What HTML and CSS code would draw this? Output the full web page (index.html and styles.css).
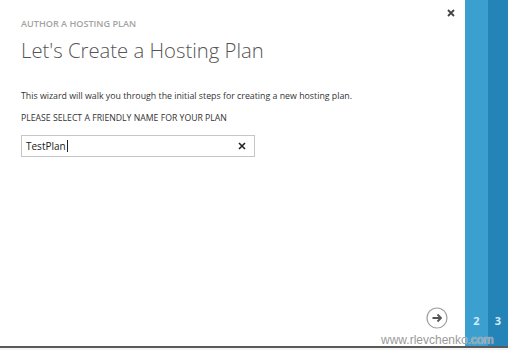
FILE: index.html
```html
<!DOCTYPE html>
<html lang="en">
<head>
<meta charset="utf-8">
<title>Author a Hosting Plan</title>
<link rel="stylesheet" href="styles.css">
</head>
<body>
<div class="frame">
  <div class="screen">
    <main class="wizard">
      <button class="close" aria-label="Close">
        <svg width="8" height="8" viewBox="0 0 8 8"><path d="M1 1L7 7M7 1L1 7" stroke="#444" stroke-width="1.8"/></svg>
      </button>
      <div class="kicker">AUTHOR A HOSTING PLAN</div>
      <h1 class="title">Let's Create a Hosting Plan</h1>
      <p class="intro">This wizard will walk you through the initial steps for creating a new hosting plan.</p>
      <div class="label">PLEASE SELECT A FRIENDLY NAME FOR YOUR PLAN</div>
      <div class="field">
        <span class="value">TestPlan<span class="caret"></span></span>
        <svg class="clear" width="8" height="8" viewBox="0 0 8 8"><path d="M1 1L7 7M7 1L1 7" stroke="#222" stroke-width="1.6"/></svg>
      </div>
      <div class="footer">
        <button class="next" aria-label="Next">
          <svg width="22" height="22" viewBox="0 0 22 22">
            <circle cx="11" cy="11" r="10" fill="none" stroke="#a0a0a0" stroke-width="1.2"/>
            <path d="M6.5 11H15M11.5 7.5L15 11L11.5 14.5" fill="none" stroke="#555" stroke-width="1.8"/>
          </svg>
        </button>
      </div>
    </main>
    <div class="step step-2"><span>2</span></div>
    <div class="step step-3"><span>3</span></div>
    <div class="watermark">www.rlevchenko.com</div>
  </div>
  <div class="rule"></div>
</div>
</body>
</html>
```
FILE: styles.css
```css
html, body {
  margin: 0;
  padding: 0;
  background: #ffffff;
}
.frame {
  width: 508px;
  height: 350px;
  display: flex;
  flex-direction: column;
  background: #f4f4f4;
}
.screen {
  position: relative;
  height: 346px;
  display: flex;
  flex-direction: row;
}
.rule {
  height: 2px;
  background: #5a5a5a;
}
.wizard {
  position: relative;
  width: 465px;
  background: #ffffff;
  display: flex;
  flex-direction: column;
  padding: 18px 0 0 21px;
  box-sizing: border-box;
  font-family: "Open Sans", "Noto Sans", sans-serif;
}
.close {
  position: absolute;
  top: 9px;
  right: 10px;
  border: 0;
  background: none;
  padding: 0;
  width: 8px;
  height: 8px;
  display: flex;
}
.kicker {
  font-size: 9.1px;
  font-weight: 600;
  color: #a3a3a3;
  line-height: 12px;
}
.title {
  margin: 7px 0 0 0;
  font-size: 20.3px;
  font-weight: 300;
  color: #555555;
  line-height: 26px;
}
.intro {
  margin: 27px 0 0 0;
  font-size: 8.8px;
  color: #333333;
  line-height: 12px;
}
.label {
  margin-top: 11px;
  font-size: 8.7px;
  font-weight: 400;
  color: #333333;
  line-height: 11px;
}
.field {
  margin-top: 11px;
  width: 234px;
  height: 22px;
  box-sizing: border-box;
  border: 1px solid #c6c6c6;
  display: flex;
  align-items: center;
  justify-content: space-between;
  padding: 0 8px 0 4px;
}
.value {
  font-size: 10px;
  color: #222222;
  display: flex;
  align-items: center;
}
.caret {
  display: inline-block;
  width: 1px;
  height: 12px;
  background: #222;
  margin-left: 1px;
}
.footer {
  margin-top: auto;
  display: flex;
  justify-content: flex-end;
  padding: 0 17px 17px 0;
}
.next {
  border: 0;
  background: none;
  padding: 0;
  width: 22px;
  height: 22px;
  display: flex;
}
.step {
  display: flex;
  align-items: flex-end;
  justify-content: center;
  padding-bottom: 19px;
  box-sizing: border-box;
  font-family: "Open Sans", "Noto Sans", sans-serif;
  font-weight: 700;
  font-size: 11px;
  color: #d6ecf7;
  line-height: 12px;
}
.step-2 {
  width: 23px;
  background: #3b9fd0;
}
.step-3 {
  width: 20px;
  background: #2584b7;
}
.watermark {
  position: absolute;
  left: 381px;
  top: 333px;
  font-family: "Liberation Sans", Arial, sans-serif;
  font-size: 12px;
  color: #9a9a9a;
  line-height: 14px;
  text-shadow: 0 0 1px #ffffff;
}
```
